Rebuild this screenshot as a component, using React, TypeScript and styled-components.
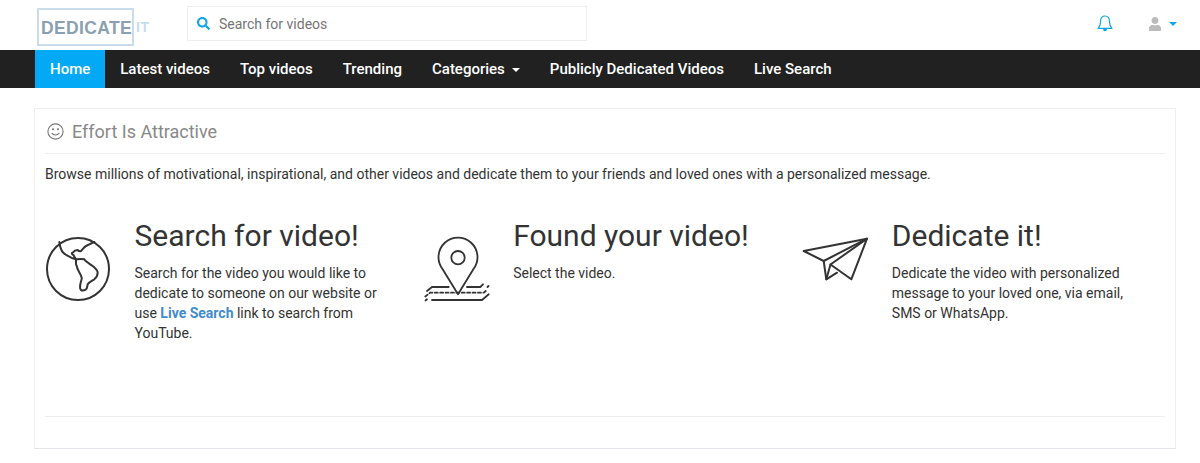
import React, { FC } from 'react';
import styled, { createGlobalStyle } from 'styled-components';
import { FaSearch, FaUser } from 'react-icons/fa';

const GlobalStyle = createGlobalStyle`
	html, body {
		margin: 0;
		padding: 0;
		background: #fff;
		font-family: Roboto, 'Liberation Sans', sans-serif;
		color: #333;
	}
	* {
		box-sizing: border-box;
	}
`;

const NAV_ITEMS = ['Latest videos', 'Top videos', 'Trending'];

const STEPS = [
	{ key: 'search', title: 'Search for video!' },
	{ key: 'found', title: 'Found your video!' },
	{ key: 'dedicate', title: 'Dedicate it!' },
];

const GlobeIcon: FC = () => (
	<svg width="66" height="66" viewBox="0 0 66 66" fill="none" stroke="#333" strokeWidth="2" strokeLinejoin="round" strokeLinecap="round">
		<circle cx="33" cy="33" r="31" />
		<path d="M14.3 6 C15 11 16 14.5 18.3 16.7 C21 19.5 25 21 27.7 22.3 L31 23.3 C30.5 21.5 28.7 21 28.7 19.3 C26.5 18.5 26.5 16.5 27.7 16.7 C29 15 31 14 32.7 14 C34 15.5 35 15.5 36 15 C38 13 39 11 41 10 C44 8.5 47 7 49.3 6" />
		<path d="M31 23.3 C34 23 37 22.5 39.3 23.3 C41 26 45 28 47.7 30 C50 32 52.5 34 52.7 36.7 C52.5 40 51 42 49.3 43.3 C46.5 45 44 46 42.7 48.3 C42 50 42.5 52 41 53.3 C39 54.5 37 54.5 36 54 C34.5 52.5 35 50 35.3 48.3 C35.5 46 37 44 36.7 41.7 C36 38.5 34 36 32.7 33.3 C32 31.5 32 30 31 28.3 Z" />
	</svg>
);

const PinIcon: FC = () => (
	<svg width="68" height="68" viewBox="0 0 68 68" fill="none" stroke="#333" strokeWidth="1.8" strokeLinejoin="round" strokeLinecap="round">
		<path d="M34 58.3 L18.5 33 A19.5 19.5 0 1 1 49.5 33 Z" />
		<circle cx="34" cy="21.7" r="6.7" />
		<path d="M3 55 L8 51 H24.7" />
		<path d="M43 51 H56.3 L59 48.3" />
		<path d="M63.5 51 L64.5 50" />
		<path d="M1.3 60.5 L6 56.7 H59.7 L63 54" strokeDasharray="3 2.4" />
		<path d="M1.5 64.5 L3 63.3" />
		<path d="M8 64 H58 L64.7 58.3" />
	</svg>
);

const PlaneIcon: FC = () => (
	<svg width="68" height="48" viewBox="0 0 68 48" fill="none" stroke="#333" strokeWidth="2" strokeLinejoin="round" strokeLinecap="round">
		<path d="M65 2.7 L1.7 15 L21.7 25 L24.3 43.3 L35 36.7" />
		<path d="M65 2.7 L21.7 25" />
		<path d="M65 2.7 L28.5 28.5 L49.3 43.3 Z" />
		<path d="M24.3 43.3 L28.5 28.5" />
	</svg>
);

const stepIcon = (key: string) => {
	if (key === 'search') return <GlobeIcon />;
	if (key === 'found') return <PinIcon />;
	return <PlaneIcon />;
};

const stepBody = (key: string) => {
	if (key === 'search') {
		return (
			<>
				Search for the video you would like to dedicate to someone on our website or use{' '}
				<StepLink href="#">Live Search</StepLink> link to search from YouTube.
			</>
		);
	}
	if (key === 'found') return <>Select the video.</>;
	return <>Dedicate the video with personalized message to your loved one, via email, SMS or WhatsApp.</>;
};

const App: FC = () => {
	return (
		<>
			<GlobalStyle />
			<Header>
				<Logo>
					<LogoMain>DEDICATE</LogoMain>
					<LogoTail>IT</LogoTail>
				</Logo>
				<SearchBox>
					<FaSearch />
					<SearchInput placeholder="Search for videos" />
				</SearchBox>
				<HeaderRight>
					<svg width="16" height="17" viewBox="0 0 16 17" fill="none" stroke="#0ea5e9" strokeWidth="1.1" strokeLinejoin="round">
						<path d="M8 1 C5 1 3.6 3.2 3.6 6 C3.6 9.5 3 11.5 1 13.4 H15 C13 11.5 12.4 9.5 12.4 6 C12.4 3.2 11 1 8 1 Z" />
						<path d="M6.6 14.4 C7 16 9 16 9.4 14.4 Z" fill="#0ea5e9" />
					</svg>
					<UserMenu>
						<FaUser />
						<Caret $color="#0ea5e9" />
					</UserMenu>
				</HeaderRight>
			</Header>
			<NavBar>
				<NavItem $active>Home</NavItem>
				{NAV_ITEMS.map((item) => (
					<NavItem key={item}>{item}</NavItem>
				))}
				<NavItem>
					Categories
					<Caret $color="#fff" />
				</NavItem>
				<NavItem>Publicly Dedicated Videos</NavItem>
				<NavItem>Live Search</NavItem>
			</NavBar>
			<Main>
				<Card>
					<CardTitle>
						<svg width="17" height="17" viewBox="0 0 17 17" fill="none" stroke="#777" strokeWidth="1.1" strokeLinecap="round">
							<circle cx="8.5" cy="8.5" r="7.6" />
							<path d="M5 10.2 C6 12.6 11 12.6 12 10.2" />
							<circle cx="6" cy="6.3" r="0.5" fill="#777" />
							<circle cx="11" cy="6.3" r="0.5" fill="#777" />
						</svg>
						Effort Is Attractive
					</CardTitle>
					<Intro>
						Browse millions of motivational, inspirational, and other videos and dedicate them to your friends and
						loved ones with a personalized message.
					</Intro>
					<Steps>
						{STEPS.map((step) => (
							<Step key={step.key}>
								<StepIcon>{stepIcon(step.key)}</StepIcon>
								<StepText>
									<StepTitle>{step.title}</StepTitle>
									<StepBody>{stepBody(step.key)}</StepBody>
								</StepText>
							</Step>
						))}
					</Steps>
					<CardFooter />
				</Card>
			</Main>
		</>
	);
};

export default App;

const Header = styled.header`
	height: 50px;
	display: flex;
	align-items: flex-start;
	padding-left: 37px;
`;

const Logo = styled.div`
	display: flex;
	align-items: center;
	width: 150px;
	height: 38px;
	margin-top: 8px;
	font-family: 'Liberation Sans', Arial, sans-serif;
	font-weight: 700;
	font-size: 17.5px;
	position: relative;
`;

const LogoMain = styled.span`
	width: 97px;
	height: 38px;
	border: 2px solid #c9dcec;
	color: #8a9fb2;
	padding-left: 2px;
	line-height: 36px;
	letter-spacing: 0.35px;
	white-space: nowrap;
`;

const LogoTail = styled.span`
	color: #c6dcec;
	font-size: 14px;
	margin-left: 2px;
	letter-spacing: 0.5px;
	font-weight: 700;
`;

const SearchBox = styled.div`
	width: 400px;
	height: 35px;
	margin-top: 6px;
	border: 1px solid #eee;
	display: flex;
	align-items: center;
	padding-left: 9px;

	svg {
		color: #0ea5e9;
		font-size: 13px;
		flex: none;
	}
`;

const SearchInput = styled.input`
	border: 0;
	outline: 0;
	flex: 1;
	margin-left: 7px;
	font-family: Roboto, sans-serif;
	font-size: 14px;
	background: transparent;

	::placeholder {
		color: #999;
		opacity: 1;
	}
`;

const HeaderRight = styled.div`
	margin-left: auto;
	display: flex;
	align-items: center;
	height: 47px;
	padding-right: 23px;

	> svg {
		margin-right: 35px;
	}
`;

const UserMenu = styled.div`
	display: flex;
	align-items: center;

	svg {
		color: #bbb;
		font-size: 14px;
	}

	span {
		margin-left: 7px;
	}
`;

const Caret = styled.span<{ $color: string }>`
	display: inline-block;
	width: 0;
	height: 0;
	margin-left: 7px;
	vertical-align: middle;
	border-top: 4px solid ${(p) => p.$color};
	border-left: 4px solid transparent;
	border-right: 4px solid transparent;
`;

const NavBar = styled.nav`
	height: 38px;
	background: #212121;
	display: flex;
	padding-left: 35px;
`;

const NavItem = styled.a<{ $active?: boolean }>`
	display: block;
	padding: 0 15px;
	line-height: 38px;
	font-size: 15px;
	font-weight: 500;
	color: #fff;
	background: ${(p) => (p.$active ? '#03a9f4' : 'transparent')};
`;

const Main = styled.main`
	padding: 20px 24px 0 34px;
`;

const Card = styled.section`
	height: 341px;
	border: 1px solid #eee;
	border-bottom-color: #e4e4ea;
	padding: 0 10px;
	display: flex;
	flex-direction: column;
`;

const CardTitle = styled.h2`
	margin: 0;
	height: 45px;
	padding-left: 2px;
	display: flex;
	align-items: center;
	gap: 8px;
	font-size: 18px;
	font-weight: 400;
	color: #888;
	border-bottom: 1px solid #eee;
`;

const Intro = styled.p`
	margin: 0;
	padding-top: 10px;
	font-size: 14px;
	line-height: 20px;
	color: #333;
`;

const Steps = styled.div`
	display: grid;
	grid-template-columns: repeat(3, 378.67px);
	padding-top: 34px;
	flex: 1;
`;

const Step = styled.div`
	display: flex;
	align-items: flex-start;
`;

const StepIcon = styled.div`
	width: 89.5px;
	flex: none;
	padding-top: 18px;
`;

const StepText = styled.div`
	width: 260px;
`;

const StepTitle = styled.h3`
	margin: 0 0 9px;
	font-size: 30px;
	line-height: 36px;
	font-weight: 400;
	color: #333;
`;

const StepBody = styled.p`
	margin: 0;
	font-size: 14px;
	line-height: 20px;
	color: #333;
`;

const StepLink = styled.a`
	color: #428bca;
	font-weight: 700;
	text-decoration: none;
`;

const CardFooter = styled.div`
	height: 32px;
	border-top: 1px solid #eee;
`;
